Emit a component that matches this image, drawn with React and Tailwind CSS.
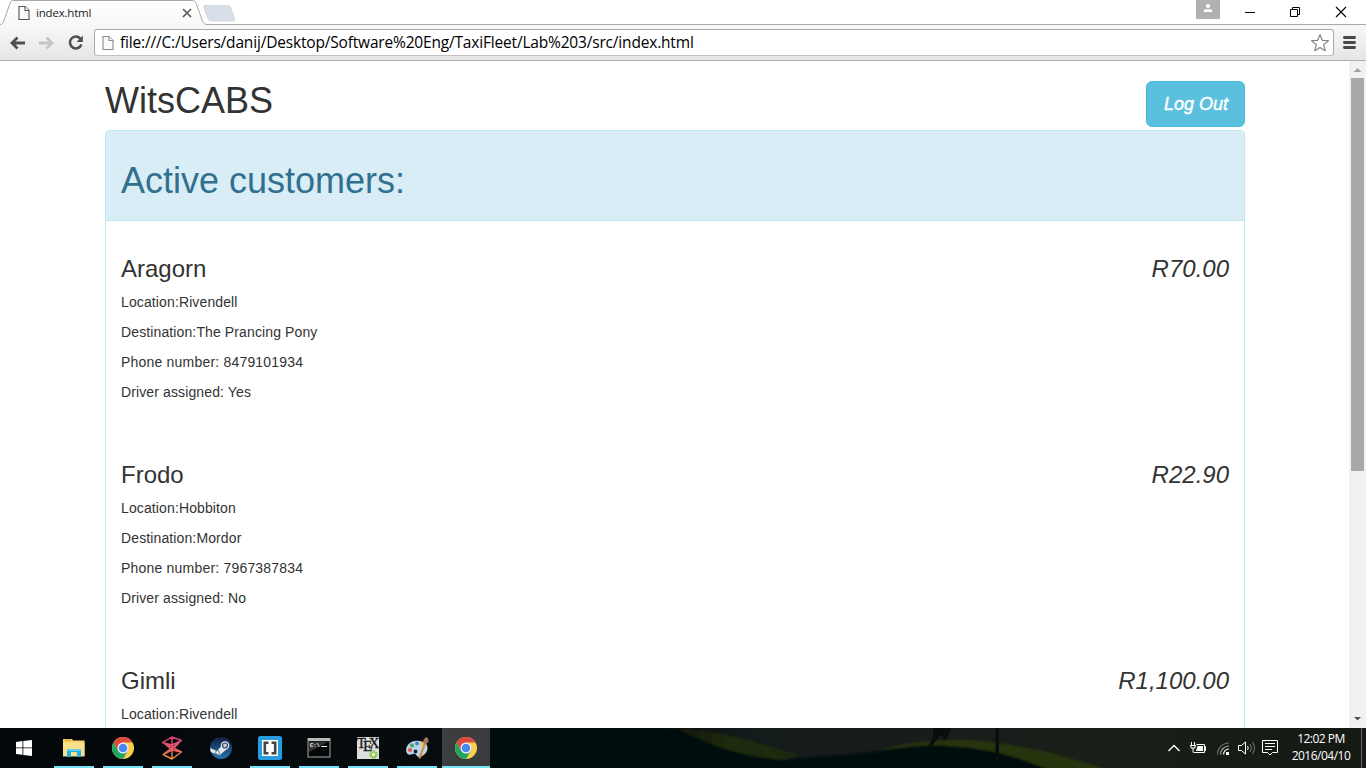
import React from "react";

const customers = [
  { name: "Aragorn", fare: "R70.00", location: "Rivendell", destination: "The Prancing Pony", phone: "8479101934", driver: "Yes" },
  { name: "Frodo", fare: "R22.90", location: "Hobbiton", destination: "Mordor", phone: "7967387834", driver: "No" },
  { name: "Gimli", fare: "R1,100.00", location: "Rivendell" },
];

function PageIcon({ className }) {
  return (
    <svg className={className} width="12" height="16" viewBox="0 0 12 16" fill="#fafafa" stroke="currentColor" strokeWidth="1.1">
      <path d="M1 1.5h6l4 4v9H1z" />
      <path d="M7 1.5v4h4" />
    </svg>
  );
}

function TabStrip() {
  return (
    <div className="relative flex h-6 shrink-0 items-center bg-white">
      <svg className="absolute left-0 top-0" width="240" height="25" viewBox="0 0 240 25">
        <defs>
          <linearGradient id="tab" x1="0" y1="0" x2="0" y2="1">
            <stop offset="0" stopColor="#ffffff" />
            <stop offset="1" stopColor="#f8f8f8" />
          </linearGradient>
        </defs>
        <path d="M0 24.5C2 24.5 3 23 3.7 21L10 3.500C10.800 1.200 11.500.5 14 .5H192C194.500.5 195.400 1.200 196.200 3.500L202.300 20.500C203.300 23.300 204.500 24.500 207 24.500V25H0z" fill="url(#tab)" />
        <path d="M0 24.500C2 24.500 3 23 3.700 21L10 3.500C10.800 1.200 11.500.5 14 .5H192C194.500.5 195.400 1.200 196.200 3.500L202.300 20.500C203.300 23.300 204.500 24.500 207 24.500H240" fill="none" stroke="#a9a9a9" />
        <path d="M205 5.500H227.500C229.300 5.500 230 6 230.600 7.500L234.700 18.500C235.300 20.200 234.700 21 233 21H211.500C209.500 21 208.500 20.300 207.800 18.500L203.800 7.500C203.300 6.200 203.800 5.500 205 5.500z" fill="#d9dfe8" stroke="#cdd2d9" strokeWidth=".7" />
      </svg>
      <PageIcon className="relative ml-[18px] mt-[2px] text-[#555]" />
      <span className="relative ml-[6px] mt-[2px] w-[146px] font-['Open_Sans',sans-serif] text-[11.5px] leading-4 tracking-[-0.2px] text-[#222]">index.html</span>
      <svg className="relative mt-[2px]" width="10" height="10" viewBox="0 0 10 10" stroke="#5a5a5a" strokeWidth="1.7">
        <path d="M1 1l8 8M9 1L1 9" />
      </svg>
      <div className="ml-auto flex h-6">
        <div className="flex h-[19px] w-6 justify-center bg-[#b1b1b1]">
          <svg width="10" height="14" viewBox="0 0 10 14" fill="#fff">
            <circle cx="5" cy="6" r="2.100" />
            <path d="M.7 12V10.800Q.7 9.200 2.500 9.200H7.500Q9.300 9.200 9.300 10.800V12z" />
          </svg>
        </div>
        <svg width="146" height="24" viewBox="0 0 146 24" fill="none" stroke="#000">
          <path d="M25 12.500H35M72.500 9.500V7.500H79.500V14.500H77.500M70.500 9.500H77.500V16.500H70.500z" />
          <path d="M116 7l10 10M126 7l-10 10" strokeWidth="1.100" />
        </svg>
      </div>
    </div>
  );
}

function Toolbar() {
  return (
    <div className="flex h-[37px] shrink-0 items-center border-y border-t-[#a9a9a9] border-b-[#b0b0b0] bg-linear-to-b from-[#f8f8f8] to-[#e6e6e6]">
      <svg className="w-[94px]" width="94" height="26" viewBox="0 30 94 26" fill="none">
        <path d="M17.500 37.500l-5.500 5.500 5.500 5.500M12 43H25" stroke="#505050" strokeWidth="2.800" />
        <path d="M46.500 37.500l5.500 5.500-5.500 5.500M52 43H39" stroke="#c5c5c5" strokeWidth="2.800" />
        <path d="M80.300 38.600A5.900 5.900 0 1 0 81.400 44.500" stroke="#505050" strokeWidth="2.500" />
        <path d="M82.900 35.600V42H76.500z" fill="#505050" />
      </svg>
      <div className="flex h-[27px] w-[1240px] items-center rounded-[3px] border border-[#a9a9a9] border-b-[#c2c2c2] bg-white">
        <PageIcon className="ml-[7px] text-[#8a8a8a]" />
        <span className="-mt-[2px] ml-[6px] whitespace-nowrap font-['Open_Sans',sans-serif] text-[15.5px] leading-5 tracking-[-0.18px] text-black">
          file:///C:/Users/danij/Desktop/Software%20Eng/TaxiFleet/Lab%203/src/index.html
        </span>
        <svg className="ml-auto mr-[3px]" width="20" height="20" viewBox="0 0 20 20" fill="#fff" stroke="#858585" strokeWidth="1.200" strokeLinejoin="round">
          <path d="M10 1.600L12.300 7.300L18.400 7.700L13.700 11.600L15.200 17.700L10 14.400L4.800 17.700L6.300 11.600L1.600 7.700L7.700 7.300z" />
        </svg>
      </div>
      <svg className="ml-[9px]" width="13" height="13" viewBox="0 0 13 13" stroke="#4a4a4a" strokeWidth="2.800" strokeLinecap="round">
        <path d="M1.400 1.500H11.600M1.400 6.500H11.600M1.400 11.500H11.600" />
      </svg>
    </div>
  );
}

function Customer({ customer }) {
  return (
    <div className="h-[206px] shrink-0 p-[15px]">
      <h3 className="mb-[10px] mt-5 flex justify-between text-[24px] leading-[26px]">
        <span>{customer.name}</span>
        <em>{customer.fare}</em>
      </h3>
      <div className="flex flex-col gap-[10px] text-[14px] leading-5 tracking-[0.12px]">
        <p>Location:{customer.location}</p>
        {customer.destination && <p>Destination:{customer.destination}</p>}
        {customer.phone && <p className="tracking-[0.2px]">Phone number: {customer.phone}</p>}
        {customer.driver && <p>Driver assigned: {customer.driver}</p>}
      </div>
    </div>
  );
}

function Scrollbar() {
  return (
    <div className="flex w-[17px] shrink-0 flex-col items-center bg-[#f1f1f1]">
      <svg className="shrink-0" width="17" height="17" viewBox="0 0 17 17"><path d="M4.500 11L8.500 7L12.500 11z" fill="#a3a3a3" /></svg>
      <div className="h-[393px] w-[13px] shrink-0 bg-[#a8a8a8]" />
      <svg className="mt-auto shrink-0" width="17" height="17" viewBox="0 0 17 17"><path d="M5 6L8.500 9.500L12 6z" fill="#505050" /></svg>
    </div>
  );
}

function ChromeIcon() {
  return (
    <svg width="24" height="24" viewBox="0 0 24 24">
      <circle cx="12" cy="12" r="11" fill="#f9d04b" />
      <path d="M2.500 6.500A11 11 0 0 1 21.500 6.500H12L7.200 14.700z" fill="#dd4b3e" />
      <path d="M2.500 6.500A11 11 0 0 0 12 23L16.800 14.700L12 17L7.200 14.700z" fill="#1fa463" />
      <circle cx="12" cy="12" r="5.500" fill="#f4f4f4" />
      <circle cx="12" cy="12" r="4.300" fill="#4a87ee" />
    </svg>
  );
}

function ExplorerIcon() {
  return (
    <svg width="24" height="24" viewBox="0 0 24 24">
      <path d="M1 3H10L11 4.500H22.500V20.500H1z" fill="#f6d56d" />
      <path d="M3 3.500H9V5H3z" fill="#e8aa25" />
      <path d="M1 6.500H22.500V20H1z" fill="#fbe08a" />
      <path d="M5 13H19V21H15V16H9V21H5z" fill="#21b1e8" />
      <path d="M5 13H19V15H5z" fill="#5fd0f5" />
    </svg>
  );
}

function MeshIcon() {
  return (
    <svg width="24" height="24" viewBox="0 0 24 24" fill="none" strokeWidth="1.400" strokeLinejoin="round">
      <defs>
        <linearGradient id="mesh" gradientUnits="userSpaceOnUse" x1="0" y1="0" x2="0" y2="24">
          <stop offset="0" stopColor="#dc3d83" />
          <stop offset=".55" stopColor="#e75b68" />
          <stop offset="1" stopColor="#f59b39" />
        </linearGradient>
      </defs>
      <path d="M12 1L2.500 6.500L12 9L21.500 4.500zM12 1V23M2.500 6.500L21.500 16L12 23L3 18.500L21.500 4.500M3 18.500L12 14L21.500 16M5 8L12 14L19 7" stroke="url(#mesh)" />
    </svg>
  );
}

function SteamIcon() {
  return (
    <svg width="24" height="24" viewBox="0 0 24 24">
      <defs>
        <linearGradient id="steam" x1="0" y1="0" x2="0" y2="1">
          <stop offset="0" stopColor="#101f45" />
          <stop offset="1" stopColor="#2673ae" />
        </linearGradient>
      </defs>
      <circle cx="12" cy="12" r="11" fill="url(#steam)" />
      <path d="M1 12L8 15L12 10.500L18 13L12.500 17.500Q10 20.500 7 18L1.800 16z" fill="#e5e7eb" />
      <circle cx="16" cy="9.500" r="4.300" fill="#e5e7eb" />
      <circle cx="16" cy="9.500" r="2.500" fill="#c8cbd2" stroke="#354766" strokeWidth="1.200" />
      <circle cx="8.500" cy="16.500" r="2" fill="none" stroke="#50617d" strokeWidth=".8" />
    </svg>
  );
}

function BracketsIcon() {
  return (
    <svg width="24" height="24" viewBox="0 0 24 24">
      <rect width="24" height="24" rx="2.500" fill="#269ce1" />
      <rect x="4" y="4" width="16" height="16" fill="#fff" />
      <path d="M10.500 6.800H6.800V17.200H10.500M13.500 6.800H17.200V17.200H13.500" fill="none" stroke="#444" strokeWidth="2.600" />
    </svg>
  );
}

function TerminalIcon() {
  return (
    <svg width="24" height="24" viewBox="0 0 24 24">
      <rect x="1" y="2.500" width="22" height="18.500" fill="#070707" stroke="#a8a8a8" />
      <path d="M1 2H23V5H1z" fill="#bcbcbc" />
      <path d="M2 5.500H22L2 16z" fill="#333" />
      <text x="3" y="11" fill="#fff" fontFamily="Liberation Mono, monospace" fontSize="5.500" fontWeight="bold">C:\.</text>
      <path d="M15 10.500H20" stroke="#fff" />
    </svg>
  );
}

function TexIcon() {
  return (
    <svg width="24" height="24" viewBox="0 0 24 24">
      <rect x="1" y="1" width="22" height="22" fill="#dedede" />
      <g fill="#161616" stroke="#161616" strokeWidth=".3" fontFamily="Liberation Serif, serif" fontSize="15">
        <text x=".8" y="11.500">T</text>
        <text x="7" y="15">E</text>
        <text x="12.800" y="11.500">X</text>
      </g>
      <circle cx="17.500" cy="18.500" r="3" fill="#eaf5d6" stroke="#82c43d" strokeWidth="2.600" strokeDasharray="1.500 .8" />
      <circle cx="17.500" cy="18.500" r="2.200" fill="#eef7df" stroke="#82c43d" />
    </svg>
  );
}

function PaintIcon() {
  return (
    <svg width="24" height="24" viewBox="0 0 24 24">
      <path d="M1.200 15C.5 9 6 4.500 12.500 4.800C19 5 23 8 22.500 12.500C22 18 17 20.500 14.500 20.800C11 21.500 12 17.500 9 17.800C6.500 18.500 2 20.500 1.200 15z" fill="#b9d5e9" />
      <circle cx="5" cy="14" r="2" fill="#e5534b" />
      <circle cx="7" cy="9.500" r="2" fill="#45a865" />
      <circle cx="12" cy="7.500" r="1.900" fill="#4283cf" />
      <circle cx="16.500" cy="8" r="1.800" fill="#f1cc43" />
      <circle cx="10.500" cy="15.500" r="1.900" fill="#16232d" />
      <path d="M14.500 22.500L20 7" stroke="#e0883a" strokeWidth="2.200" />
      <path d="M18.200 7.300Q17.500 3.500 21.500 1Q24 2.500 23.600 5.500L20.800 8.600z" fill="#a6785a" />
    </svg>
  );
}

const apps = [
  { id: "explorer", Icon: ExplorerIcon, open: true },
  { id: "chrome", Icon: ChromeIcon, open: true },
  { id: "mesh", Icon: MeshIcon, open: true },
  { id: "steam", Icon: SteamIcon, open: false },
  { id: "brackets", Icon: BracketsIcon, open: true },
  { id: "terminal", Icon: TerminalIcon, open: true },
  { id: "tex", Icon: TexIcon, open: true },
  { id: "paint", Icon: PaintIcon, open: true },
];

function Wallpaper() {
  return (
    <svg className="absolute inset-0" width="1366" height="40" viewBox="0 0 1366 40">
      <defs>
        <linearGradient id="sky" x1="0" y1="0" x2="1" y2="0">
          <stop offset="0" stopColor="#030709" />
          <stop offset=".48" stopColor="#080e10" />
          <stop offset=".55" stopColor="#141b1b" />
          <stop offset=".8" stopColor="#1b1f1a" />
          <stop offset="1" stopColor="#151914" />
        </linearGradient>
        <linearGradient id="hill" x1="0" y1="0" x2="1" y2="0">
          <stop offset="0" stopColor="#101708" />
          <stop offset=".45" stopColor="#1f2b0f" />
          <stop offset="1" stopColor="#1d280f" />
        </linearGradient>
        <filter id="soft"><feGaussianBlur stdDeviation="1.200" /></filter>
      </defs>
      <rect width="1366" height="40" fill="url(#sky)" />
      <g filter="url(#soft)">
        <path d="M530 0H590Q570 8 545 6z" fill="#151d08" />
        <path d="M675 0C720 2 755 14 800 27L770 36Q715 21 675 0z" fill="url(#hill)" />
        <path d="M880 21C930 10 970 8 1020 19C1060 25 1080 34 1110 42H1030C1010 23 960 18 880 21z" fill="#25340d" />
        <path d="M490 0H675C705 14 735 29 785 32C820 27 850 28 880 23C920 16 940 17 960 19C995 22 1017 29 1050 42H490z" fill="#04090a" />
      </g>
      <path d="M933 0H951L949 6L945 13L941 7L930 20L928 18L933 9zM995.500 0H999V34H995.500z" fill="#090d0d" />
    </svg>
  );
}

function Tray() {
  return (
    <svg className="ml-auto shrink-0" width="114" height="40" viewBox="0 0 114 40" fill="none" stroke="#fff">
      <path d="M2.500 23L8 17.500L13.500 23" strokeWidth="1.400" />
      <path d="M30.500 16.500H38.500V24.500H27.500M38.500 18.500H39.500V22.500H38.500" />
      <path d="M31.500 18H37V23H30z" fill="#fff" stroke="none" />
      <path d="M25.500 14V17M28.500 14V17M24 17.500H30M25 18V20H29V18M27 20V24.500" />
      <g strokeWidth="1.200">
        <path d="M51.500 26.500A11.500 11.500 0 0 1 63 15" stroke="#707070" />
        <path d="M54.500 26.500A8.500 8.500 0 0 1 63 18" stroke="#aaa" />
        <path d="M57.500 26.500A5.500 5.500 0 0 1 63 21" />
      </g>
      <rect x="60" y="24" width="3" height="3" fill="#fff" stroke="none" />
      <path d="M72.500 17.500H75.500L79.500 14V26L75.500 22.500H72.500z" />
      <path d="M81.500 18Q83 20 81.500 22" />
      <path d="M84 16Q87 20 84 24M86.500 14Q90.500 20 86.500 26" stroke="#777" />
      <path d="M96.500 12.500H111.500V24.500H106.500L104 27L101.500 24.500H96.500zM99 15.500H109M99 18.500H109M99 21.500H106" />
    </svg>
  );
}

function Taskbar() {
  return (
    <div className="relative h-10 shrink-0 overflow-hidden">
      <Wallpaper />
      <div className="relative flex h-full">
        <div className="mr-[2px] flex w-12 items-center justify-center">
          <svg width="16" height="16" viewBox="0 0 16 16" fill="#fff">
            <path d="M0 2L6.500 1.100V7.500H0zM7.300 1L16 0V7.500H7.300zM0 8.300H6.500V14.800L0 13.900zM7.300 8.300H16V16L7.300 14.900z" />
          </svg>
        </div>
        <div className="flex gap-px">
          {apps.map(({ id, Icon, open }) => (
            <div key={id} className="flex w-12 flex-col items-center pt-2">
              <Icon />
              {open && <div className="mt-auto h-[2px] w-10 bg-[#76e3f7]" />}
            </div>
          ))}
          <div className="flex w-12 flex-col items-center bg-[#3b3d3e] pt-2">
            <ChromeIcon />
            <div className="mt-auto h-[2px] w-12 bg-[#76e3f7]" />
          </div>
        </div>
        <Tray />
        <div className="ml-[2px] flex w-[79px] shrink-0 flex-col items-center whitespace-nowrap pr-px pt-[2px] font-['Open_Sans',sans-serif] text-[12px] leading-[17px] text-white">
          <span className="tracking-[-0.5px]">12:02 PM</span>
          <span className="tracking-[-0.5px]">2016/04/10</span>
        </div>
        <div className="mr-1 w-px bg-[#666a66]" />
      </div>
    </div>
  );
}

export default function App() {
  return (
    <div className="flex h-[768px] w-[1366px] flex-col overflow-hidden bg-white">
      <TabStrip />
      <Toolbar />
      <div className="flex min-h-0 flex-1">
        <main className="flex flex-1 flex-col overflow-hidden pl-[105px] pr-[104px] font-['Liberation_Sans',sans-serif] text-[#333]">
          <div className="flex h-[69px] shrink-0 items-start justify-between pt-5">
            <h1 className="text-[36px] leading-[39.6px]">WitsCABS</h1>
            <button className="h-[46px] w-[99px] rounded-[6px] border border-[#46b8da] bg-[#5bc0de] pl-px text-[18px] italic leading-6 text-white [-webkit-text-stroke:0.4px_white]">Log Out</button>
          </div>
          <div className="flex shrink-0 flex-col rounded-[4px] border border-[#bce8f1]">
            <div className="h-[90px] rounded-t-[3px] border-b border-[#bce8f1] bg-[#d9edf7] px-[15px] pt-[30px] text-[#31708f]">
              <h1 className="text-[36px] leading-[39.6px]">Active customers:</h1>
            </div>
            {customers.map((customer) => (
              <Customer key={customer.name} customer={customer} />
            ))}
          </div>
        </main>
        <Scrollbar />
      </div>
      <Taskbar />
    </div>
  );
}
